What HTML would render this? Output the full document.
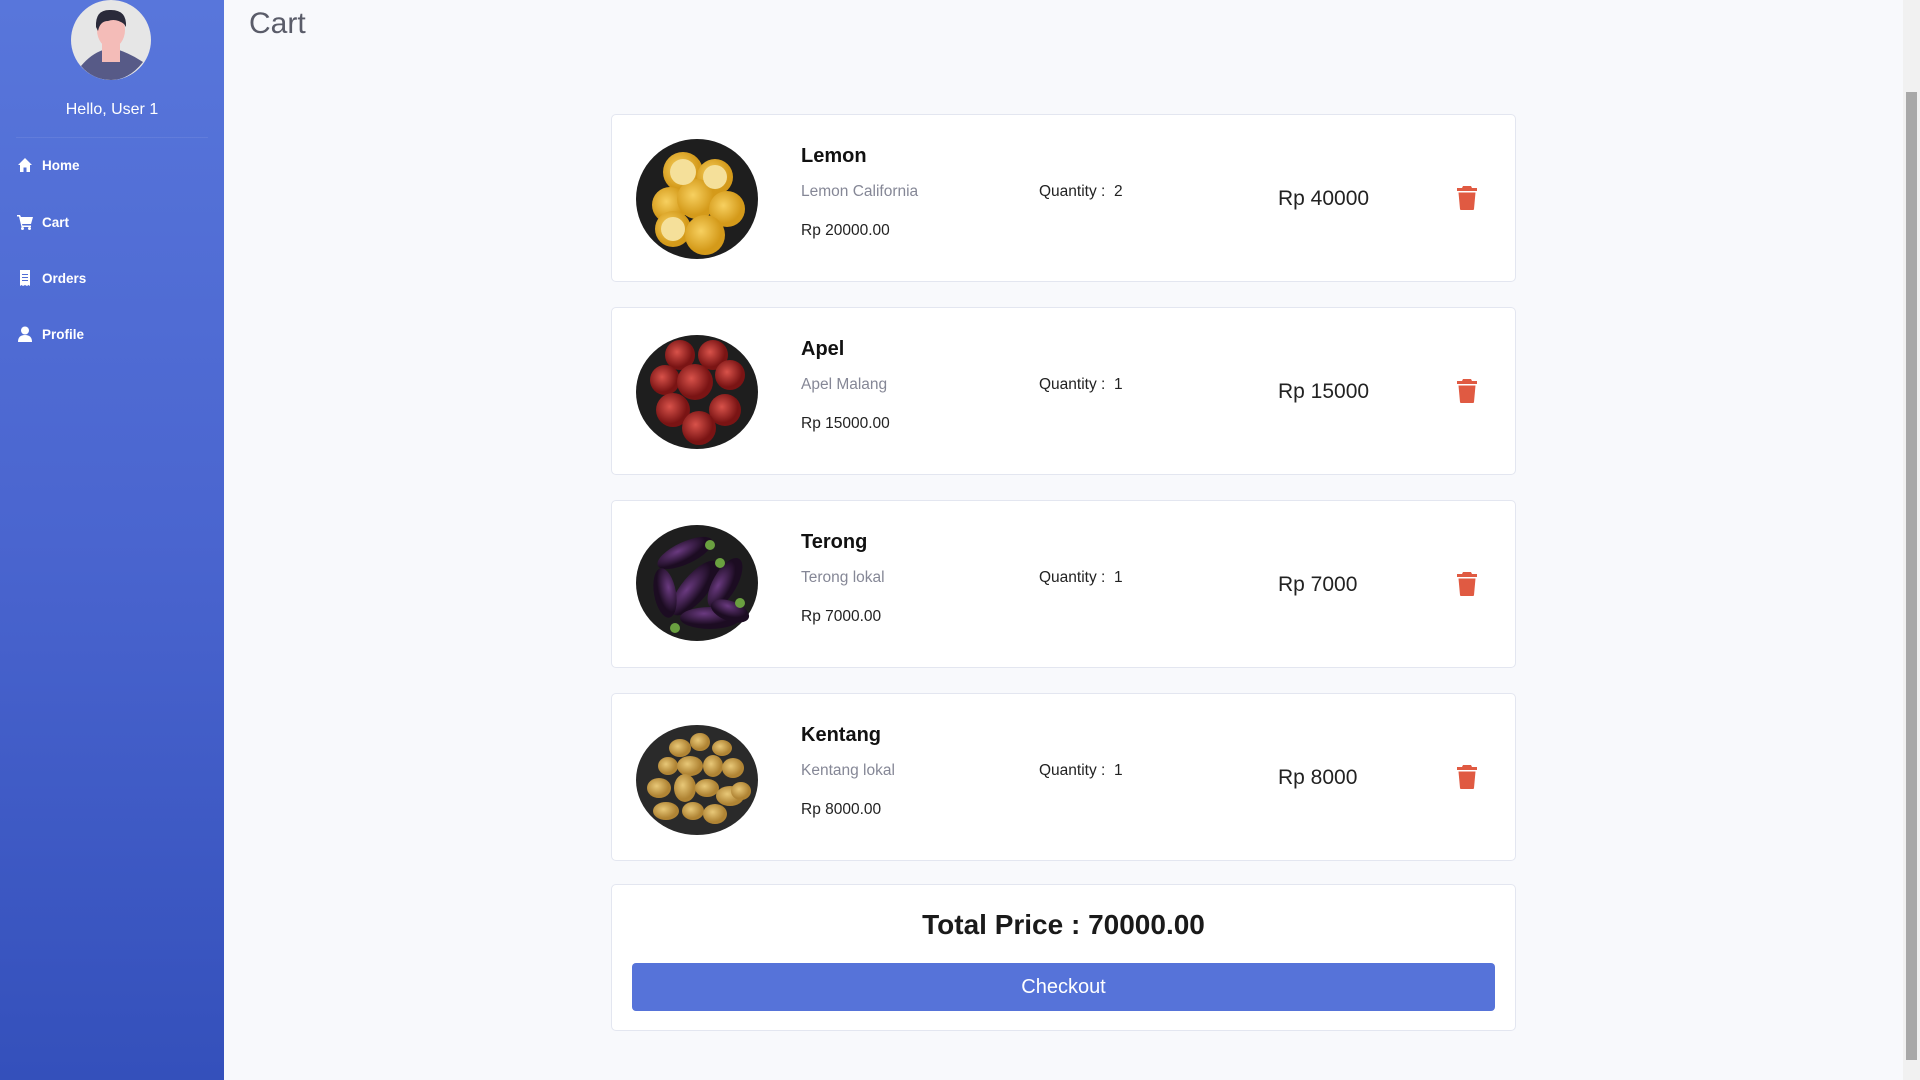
<!DOCTYPE html>
<html><head><meta charset="utf-8">
<style>
*{box-sizing:border-box;margin:0;padding:0}
body{width:1920px;height:1080px;overflow:hidden;background:#f8f9fc;font-family:"Liberation Sans",sans-serif;position:relative}
.side{position:absolute;left:0;top:0;width:224px;height:1080px;background:linear-gradient(180deg,#5876db 0%,#4a65cf 50%,#3450bb 100%)}
.av{position:absolute;left:71px;top:0;width:80px;height:80px;border-radius:50%;background:#e6e6e6;overflow:hidden}
.hello{position:absolute;top:101px;width:224px;text-align:center;color:#fff;font-size:16px}
.hr{position:absolute;left:16px;width:192px;top:137px;border-top:1px solid rgba(255,255,255,.08)}
.nav{position:absolute;left:17px;color:#fff;font-weight:bold;font-size:13.5px;display:flex;align-items:center}
.nav svg{width:16px;height:16px;margin-right:9px;fill:#fff}
h1{position:absolute;left:249px;top:7px;font-weight:normal;font-size:30px;color:#5a5c69}
.card{position:absolute;left:611px;width:905px;height:168px;background:#fff;border:1px solid #e3e6f0;border-radius:5px}
.img{position:absolute;left:23px;top:22px}
.name{position:absolute;left:189px;top:30px;font-weight:bold;font-size:20px;color:#111}
.desc{position:absolute;left:189px;top:68px;font-size:15.5px;color:#858796}
.price{position:absolute;left:189px;top:107px;font-size:15.5px;color:#222}
.qty{position:absolute;left:427px;top:68px;font-size:15.5px;color:#222}
.tot{position:absolute;left:666px;top:72px;font-size:21px;color:#222}
.trash{position:absolute;left:845px;top:71px;width:20px;height:24px}
.total{position:absolute;left:611px;top:884px;width:905px;height:147px;background:#fff;border:1px solid #e3e6f0;border-radius:5px}
.total .t{position:absolute;top:24px;width:100%;text-align:center;font-weight:bold;font-size:28px;color:#1a1a1a}
.btn{position:absolute;left:20px;top:78px;width:863px;height:48px;background:#5673d9;border-radius:4px;color:#fff;font-size:20px;text-align:center;line-height:48px}
.sb{position:absolute;right:0;top:0;width:17px;height:1080px;background:#f1f1f1}
.sb .th{position:absolute;left:3px;width:11px;top:92px;height:968px;background:#a8a8a8}
</style></head><body>
<div class="side">
  <div class="av"><svg width="80" height="80" viewBox="0 0 80 80">
    <path d="M10 66 Q20 54 32 50 L48 50 Q60 54 72 62 Q58 80 40 80 Q22 80 10 66Z" fill="#575a87"/>
    <rect x="31" y="40" width="18" height="22" fill="#f4bcb8"/>
    <ellipse cx="40" cy="30" rx="14" ry="18" fill="#f4bcb8"/>
    <path d="M25 27 Q24 9 40 10 Q56 10 55 27 L53 24 Q45 18 37 21 Q29 21 27 31Z" fill="#2a2a3a"/>
  </svg></div>
  <div class="hello">Hello, User 1</div>
  <div class="hr"></div>
  <div class="nav" style="top:157px"><svg viewBox="0 0 16 16"><path d="M8 1 L1 8 L3 8 L3 15 L6.5 15 L6.5 10.5 L9.5 10.5 L9.5 15 L13 15 L13 8 L15 8Z"/></svg>Home</div>
  <div class="nav" style="top:214px"><svg viewBox="0 0 16 16"><path d="M0 1 L3 1 L4 3 L16 3 L14 10 L5 10 L5.5 11.5 L14 11.5 L14 13 L4.5 13 L2 2.5 L0 2.5Z"/><circle cx="5.5" cy="14.5" r="1.5"/><circle cx="12.5" cy="14.5" r="1.5"/></svg>Cart</div>
  <div class="nav" style="top:270px"><svg viewBox="0 0 16 16"><path d="M3 0 L13 0 L13 16 L11.5 15 L10 16 L8 15 L6 16 L4.5 15 L3 16Z M5 4 L11 4 L11 5 L5 5Z M5 7 L11 7 L11 8 L5 8Z M5 10 L11 10 L11 11 L5 11Z" fill-rule="evenodd"/></svg>Orders</div>
  <div class="nav" style="top:326px"><svg viewBox="0 0 16 16"><circle cx="8" cy="4.5" r="4"/><path d="M1 16 Q1 9 8 9 Q15 9 15 16Z"/></svg>Profile</div>
</div>
<h1>Cart</h1>

<svg width="0" height="0" style="position:absolute"><defs>
<radialGradient id="gl" cx=".4" cy=".4"><stop offset="0" stop-color="#f7d060"/><stop offset="1" stop-color="#d49a1a"/></radialGradient>
<radialGradient id="ga" cx=".4" cy=".4"><stop offset="0" stop-color="#d8524a"/><stop offset="1" stop-color="#7a1414"/></radialGradient>
<radialGradient id="ge" cx=".4" cy=".3"><stop offset="0" stop-color="#6a3a80"/><stop offset="1" stop-color="#1c0c22"/></radialGradient>
<radialGradient id="gp" cx=".4" cy=".4"><stop offset="0" stop-color="#e8c878"/><stop offset="1" stop-color="#b08434"/></radialGradient>
</defs></svg>

<div class="card" style="top:114px">
  <svg class="img" width="124" height="124" viewBox="0 0 124 124"><ellipse cx="62" cy="62" rx="61" ry="60" fill="#1e1e1e"/>
  <g fill="url(#gl)"><circle cx="48" cy="35" r="20"/><circle cx="80" cy="40" r="18"/><circle cx="35" cy="68" r="18"/><circle cx="62" cy="62" r="20"/><circle cx="92" cy="72" r="18"/><circle cx="38" cy="92" r="18"/><circle cx="70" cy="98" r="20"/></g>
  <g fill="#f5e09a"><circle cx="48" cy="35" r="13"/><circle cx="80" cy="40" r="12"/><circle cx="38" cy="92" r="12"/></g></svg>
  <div class="name">Lemon</div><div class="desc">Lemon California</div><div class="price">Rp 20000.00</div>
  <div class="qty">Quantity :&nbsp; 2</div><div class="tot">Rp 40000</div>
  <svg class="trash" viewBox="0 0 20 24"><path d="M6 0 L14 0 L15 2 L20 2 L20 5 L0 5 L0 2 L5 2Z M1.5 6.5 L18.5 6.5 L17 23 Q17 24 16 24 L4 24 Q3 24 3 23Z" fill="#e05a42"/></svg>
</div>

<div class="card" style="top:307px">
  <svg class="img" width="124" height="124" viewBox="0 0 124 124"><ellipse cx="62" cy="62" rx="61" ry="57" fill="#1e1e1e"/>
  <g fill="url(#ga)"><circle cx="45" cy="25" r="15"/><circle cx="78" cy="25" r="15"/><circle cx="30" cy="50" r="15"/><circle cx="95" cy="45" r="15"/><circle cx="60" cy="52" r="18"/><circle cx="38" cy="80" r="17"/><circle cx="90" cy="80" r="16"/><circle cx="64" cy="98" r="17"/></g></svg>
  <div class="name">Apel</div><div class="desc">Apel Malang</div><div class="price">Rp 15000.00</div>
  <div class="qty">Quantity :&nbsp; 1</div><div class="tot">Rp 15000</div>
  <svg class="trash" viewBox="0 0 20 24"><path d="M6 0 L14 0 L15 2 L20 2 L20 5 L0 5 L0 2 L5 2Z M1.5 6.5 L18.5 6.5 L17 23 Q17 24 16 24 L4 24 Q3 24 3 23Z" fill="#e05a42"/></svg>
</div>

<div class="card" style="top:500px">
  <svg class="img" width="124" height="124" viewBox="0 0 124 124"><ellipse cx="62" cy="60" rx="61" ry="58" fill="#1e1e1e"/>
  <g fill="url(#ge)"><ellipse cx="50" cy="30" rx="30" ry="11" transform="rotate(-25 50 30)"/><ellipse cx="60" cy="65" rx="34" ry="13" transform="rotate(-50 60 65)"/><ellipse cx="90" cy="60" rx="28" ry="12" transform="rotate(-60 90 60)"/><ellipse cx="30" cy="70" rx="25" ry="11" transform="rotate(80 30 70)"/><ellipse cx="75" cy="95" rx="30" ry="11"/><ellipse cx="95" cy="88" rx="20" ry="10" transform="rotate(20 95 88)"/></g>
  <g fill="#6aa040"><circle cx="75" cy="22" r="5"/><circle cx="85" cy="40" r="5"/><circle cx="40" cy="105" r="5"/><circle cx="105" cy="80" r="5"/></g></svg>
  <div class="name">Terong</div><div class="desc">Terong lokal</div><div class="price">Rp 7000.00</div>
  <div class="qty">Quantity :&nbsp; 1</div><div class="tot">Rp 7000</div>
  <svg class="trash" viewBox="0 0 20 24"><path d="M6 0 L14 0 L15 2 L20 2 L20 5 L0 5 L0 2 L5 2Z M1.5 6.5 L18.5 6.5 L17 23 Q17 24 16 24 L4 24 Q3 24 3 23Z" fill="#e05a42"/></svg>
</div>

<div class="card" style="top:693px">
  <svg class="img" width="124" height="124" viewBox="0 0 124 124"><ellipse cx="62" cy="64" rx="61" ry="55" fill="#2a2a2a"/>
  <g fill="url(#gp)"><ellipse cx="45" cy="32" rx="11" ry="9"/><ellipse cx="65" cy="26" rx="10" ry="9"/><ellipse cx="87" cy="32" rx="10" ry="8"/><ellipse cx="33" cy="50" rx="10" ry="9"/><ellipse cx="55" cy="50" rx="13" ry="10"/><ellipse cx="78" cy="50" rx="10" ry="11"/><ellipse cx="98" cy="52" rx="11" ry="10"/><ellipse cx="24" cy="72" rx="12" ry="10"/><ellipse cx="50" cy="72" rx="11" ry="14"/><ellipse cx="72" cy="72" rx="12" ry="9"/><ellipse cx="95" cy="80" rx="14" ry="10"/><ellipse cx="31" cy="95" rx="13" ry="9"/><ellipse cx="58" cy="95" rx="11" ry="9"/><ellipse cx="80" cy="98" rx="12" ry="10"/><ellipse cx="106" cy="75" rx="10" ry="9"/></g></svg>
  <div class="name">Kentang</div><div class="desc">Kentang lokal</div><div class="price">Rp 8000.00</div>
  <div class="qty">Quantity :&nbsp; 1</div><div class="tot">Rp 8000</div>
  <svg class="trash" viewBox="0 0 20 24"><path d="M6 0 L14 0 L15 2 L20 2 L20 5 L0 5 L0 2 L5 2Z M1.5 6.5 L18.5 6.5 L17 23 Q17 24 16 24 L4 24 Q3 24 3 23Z" fill="#e05a42"/></svg>
</div>

<div class="total"><div class="t">Total Price : 70000.00</div><div class="btn">Checkout</div></div>
<div class="sb"><div class="th"></div></div>
</body></html>
